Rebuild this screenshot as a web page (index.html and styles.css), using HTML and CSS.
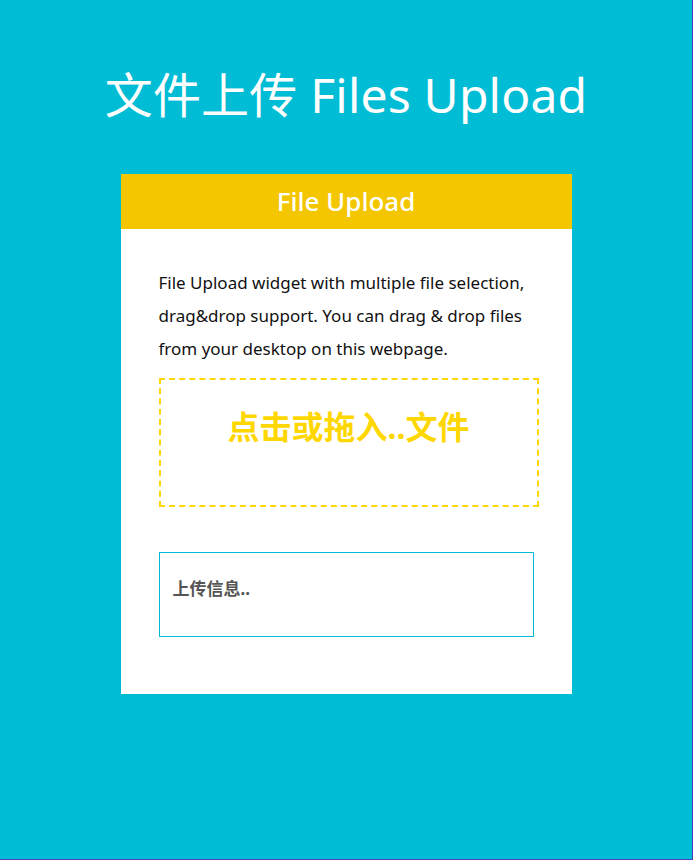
FILE: index.html
```html
<!DOCTYPE html>
<html lang="zh">
<head>
<meta charset="utf-8">
<title>文件上传 Files Upload</title>
<link rel="stylesheet" href="styles.css">
</head>
<body>
<div class="page">
  <h1 class="title">文件上传 Files Upload</h1>
  <div class="card">
    <div class="card-head">File Upload</div>
    <div class="card-body">
      <p class="desc">File Upload widget with multiple file selection, drag&amp;drop support. You can drag &amp; drop files from your desktop on this webpage.</p>
      <div class="drop">点击或拖入..文件</div>
      <div class="info">上传信息..</div>
    </div>
  </div>
</div>
</body>
</html>
```

FILE: styles.css
```css
html, body {
  margin: 0;
  padding: 0;
}
body {
  font-family: "Noto Sans", "Noto Sans CJK SC", sans-serif;
}
.page {
  box-sizing: border-box;
  min-height: 860px;
  background: #00bcd4;
  border-right: 1px solid #4b3bbd;
  border-bottom: 1px solid #4b3bbd;
  padding-top: 63px;
  overflow: hidden;
}
.title {
  margin: 0;
  text-align: center;
  color: #fff;
  font-size: 48px;
  line-height: 64px;
  font-weight: 400;
  letter-spacing: 0.2px;
  font-family: "Noto Sans", "Noto Sans CJK SC", sans-serif;
}
.card {
  width: 451px;
  margin: 47px auto 0;
  background: #fff;
}
.card-head {
  height: 55px;
  line-height: 54px;
  background: #f4c600;
  color: #fff;
  text-align: center;
  font-size: 26px;
  font-weight: 500;
}
.card-body {
  padding: 37px 38px 57px;
}
.desc {
  margin: 0;
  font-size: 17px;
  line-height: 33px;
  color: #111;
}
.drop {
  box-sizing: content-box;
  width: calc(100% + 1px);
  height: 98px;
  margin-top: 13px;
  padding-top: 27px;
  border: 2px dashed #ffd700;
  color: #ffd700;
  text-align: center;
  font-size: 32px;
  font-weight: 700;
  line-height: 40px;
}
.info {
  box-sizing: border-box;
  margin-top: 45px;
  height: 85px;
  border: 1px solid #00bcd4;
  padding: 24px 13px 0;
  font-size: 17px;
  line-height: 24px;
  font-weight: 700;
  color: #555;
}
```
